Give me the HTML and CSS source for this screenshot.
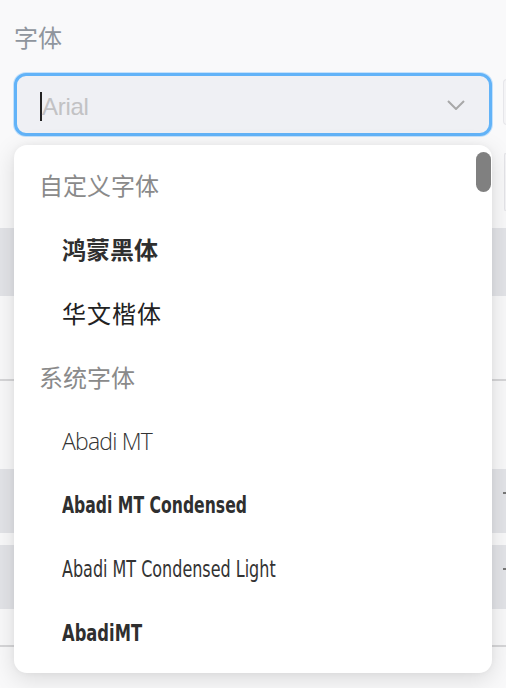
FILE: index.html
```html
<!DOCTYPE html>
<html lang="zh">
<head>
<meta charset="utf-8">
<link rel="stylesheet" href="styles.css">
</head>
<body>
<div class="page">
  <div class="label">字体</div>
  <div class="field-row">
    <div class="select">
      <span class="caret"></span>
      <span class="placeholder">Arial</span>
      <svg class="chevron" width="18" height="10" viewBox="0 0 18 10"><polyline points="1,1 9,9 17,1" fill="none" stroke="#a8a8a8" stroke-width="2"/></svg>
    </div>
    <div class="side-box"></div>
  </div>
  <div class="under">
    <div class="bg">
      <div class="bg-box"></div>
      <div class="bg-gap g1"></div>
      <div class="bg-band b1"></div>
      <div class="bg-gap g2"></div>
      <div class="bg-line"></div>
      <div class="bg-gap g3"></div>
      <div class="bg-band b2"><span class="dot"></span></div>
      <div class="bg-gap g4"></div>
      <div class="bg-band b3"><span class="dot"></span></div>
      <div class="bg-gap g5"></div>
      <div class="bg-line"></div>
    </div>
    <div class="dropdown">
      <div class="thumb"></div>
      <div class="group">自定义字体</div>
      <div class="item cjk-bold">鸿蒙黑体</div>
      <div class="item cjk-kai">华文楷体</div>
      <div class="group">系统字体</div>
      <div class="item abadi">Abadi MT</div>
      <div class="item"><span class="cond cond-bold">Abadi MT Condensed</span></div>
      <div class="item"><span class="cond cond-light">Abadi MT Condensed Light</span></div>
      <div class="item"><span class="cond cond-short">AbadiMT</span></div>
    </div>
  </div>
</div>
</body>
</html>
```
FILE: styles.css
```css
html, body {
  margin: 0;
  padding: 0;
}
body {
  background: #f9f9fa;
  font-family: "Noto Sans CJK SC", "Noto Sans", sans-serif;
  width: 506px;
  height: 688px;
  overflow: hidden;
}
.page {
  padding: 17px 0 0 0;
  width: 506px;
  height: 688px;
  box-sizing: border-box;
  overflow: hidden;
}
.label {
  padding-left: 14px;
  font-size: 24px;
  line-height: 40px;
  color: #8f959d;
  height: 40px;
}
.field-row {
  display: flex;
  margin-top: 16px;
  padding-left: 14px;
  gap: 11px;
}
.select {
  height: 57px;
  border: 3px solid #62b3f8;
  border-radius: 12px;
  box-shadow: 0 0 0 1px #c4e1fb;
  background: #eff0f4;
  display: flex;
  align-items: center;
  padding-left: 23px;
  box-sizing: content-box;
  width: 449px;
  flex: none;
}
.caret {
  width: 2px;
  height: 29px;
  margin-top: 4px;
  background: #222;
  flex: none;
}
.placeholder {
  font-family: "Liberation Sans", Arial, sans-serif;
  font-size: 24px;
  letter-spacing: -0.3px;
  color: #c2c2c4;
  margin-top: 4px;
  flex: 1;
}
.chevron {
  margin-right: 24px;
  flex: none;
}
.side-box {
  width: 3px;
  height: 44px;
  margin-top: 6px;
  border: 1px solid #e6e6ea;
  border-right: none;
  border-radius: 6px 0 0 6px;
  background: #f4f4f6;
  flex: none;
}
.under {
  position: relative;
  margin-top: 9px;
}
.bg {
  display: flex;
  flex-direction: column;
}
.bg-box {
  height: 56px;
  margin: 8px 0 0 504px;
  border: 1px solid #e4e4e8;
  border-right: none;
  border-radius: 6px 0 0 6px;
  background: #f4f4f6;
}
.g1 { height: 17px; }
.g2 { height: 83px; }
.g3 { height: 88px; }
.g4 { height: 12px; }
.g5 { height: 36px; }
.bg-band {
  background: #e3e4e8;
  position: relative;
}
.b1 { height: 68px; }
.b2 { height: 64px; }
.b3 { height: 64px; }
.bg-line {
  height: 2px;
  background: #d6d6d8;
}
.dot {
  position: absolute;
  left: 503px;
  top: 23px;
  width: 3px;
  height: 2px;
  background: #777;
}
.dropdown {
  position: absolute;
  left: 14px;
  top: 0;
  width: 478px;
  height: 528px;
  box-sizing: border-box;
  padding: 8px 0;
  background: #fff;
  border-radius: 13px;
  box-shadow: 0 6px 24px rgba(0, 0, 0, 0.13), 0 0 6px rgba(0, 0, 0, 0.04);
}
.thumb {
  position: absolute;
  right: 1px;
  top: 7px;
  width: 15px;
  height: 40px;
  border-radius: 8px;
  background: #808080;
}
.group {
  height: 64px;
  line-height: 64px;
  padding-left: 25px;
  font-size: 24px;
  color: #8a8a8a;
}
.item {
  height: 64px;
  line-height: 64px;
  padding-left: 48px;
  font-size: 24px;
  color: #2f2f2f;
}
.cjk-bold {
  font-weight: 700;
}
.cjk-kai {
  font-weight: 400;
  color: #222;
  letter-spacing: 1px;
}
.abadi {
  font-family: "Open Sans", sans-serif;
  font-weight: 300;
  font-size: 23px;
  letter-spacing: -0.8px;
  color: #333;
}
.cond {
  display: inline-block;
  vertical-align: top;
  line-height: 64px;
  font-family: "DejaVu Sans", sans-serif;
  font-size: 23px;
  transform-origin: left center;
  white-space: nowrap;
}
.cond-bold {
  font-weight: 700;
  transform: scaleX(0.68);
}
.cond-short {
  font-weight: 700;
  transform: scaleX(0.71);
}
.cond-light {
  font-weight: 400;
  color: #333;
  transform: scaleX(0.695);
}
```
